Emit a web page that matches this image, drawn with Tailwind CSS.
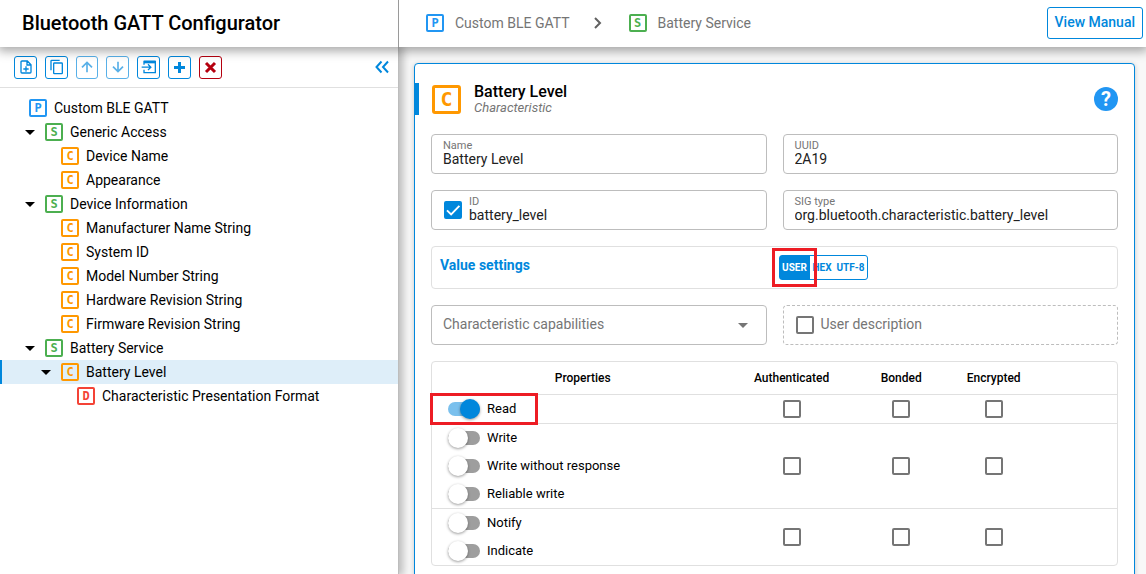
<!DOCTYPE html>
<html lang="en">
<head>
<meta charset="utf-8">
<meta name="viewport" content="width=device-width, initial-scale=1">
<title>Bluetooth GATT Configurator</title>
<script src="https://cdn.jsdelivr.net/npm/@tailwindcss/browser@4"></script>
</head>
<body class="flex h-screen flex-col overflow-hidden bg-[#f8f8f8] font-['Roboto',sans-serif] text-sm text-black">

<header class="relative z-10 flex h-[47px] shrink-0 bg-white shadow-[0_2px_10px_2px_rgba(0,0,0,0.35)]">
  <div class="flex w-[399px] shrink-0 items-center border-r border-[#9a9a9a] pb-0.5 pl-[22px]">
    <h1 class="text-xl font-medium">Bluetooth GATT Configurator</h1>
  </div>
  <div class="flex flex-1 items-center justify-between pr-[3px] pb-0.5 pl-[27px]">
    <nav aria-label="Breadcrumb" class="flex items-center text-[#757575]">
      <a href="#project" class="flex items-center gap-[11px]"><span class="flex size-[18px] items-center justify-center rounded-xs border-2 border-[#2196f3] font-['DejaVu_Sans_Mono',monospace] text-xs leading-none font-bold text-[#2196f3]">P</span>Custom BLE GATT</a>
      <svg class="mx-[18px] size-[18px]" viewBox="0 0 18 18" fill="none" stroke="#616161" stroke-width="2" aria-hidden="true"><path d="M7 4l5 5-5 5"/></svg>
      <a href="#service" class="flex items-center gap-[11px] pl-[5px]"><span class="flex size-[18px] items-center justify-center rounded-xs border-2 border-[#4caf50] font-['DejaVu_Sans_Mono',monospace] text-xs leading-none font-bold text-[#4caf50]">S</span>Battery Service</a>
    </nav>
    <button type="button" class="h-8 rounded-[3px] border border-[#0087dc] px-[7px] pb-0.5 font-medium text-[#0087dc]">View Manual</button>
  </div>
</header>

<div class="flex min-h-0 flex-1">
  <aside class="relative w-[399px] shrink-0 border-r border-[#bdbdbd] bg-white shadow-[2px_0_8px_2px_rgba(0,0,0,0.25)]">
    <div role="toolbar" aria-label="Attribute actions" class="flex h-[41px] items-center gap-2 border-b border-[#e0e0e0] pr-2 pl-[14px] text-[#0087dc]">
      <button type="button" aria-label="New item" class="flex size-[23px] items-center justify-center rounded-[3px] border border-current">
        <svg class="size-4" viewBox="0 0 24 24" fill="none" stroke="currentColor" stroke-width="2"><path d="M14 3H6a1.500 1.500 0 0 0-1.500 1.500v15A1.500 1.500 0 0 0 6 21h12a1.500 1.500 0 0 0 1.500-1.500V8.500zM13.500 3v6h6M12 11v8M8 15h8"/></svg></button>
      <button type="button" aria-label="Duplicate" class="flex size-[23px] items-center justify-center rounded-[3px] border border-current">
        <svg class="size-4" viewBox="0 0 24 24" fill="currentColor"><path d="M19 21H8V7h11m0-2H8a2 2 0 0 0-2 2v14a2 2 0 0 0 2 2h11a2 2 0 0 0 2-2V7a2 2 0 0 0-2-2m-3-4H4a2 2 0 0 0-2 2v14h2V3h12z"/></svg></button>
      <button type="button" aria-label="Move up" class="flex h-[23px] w-[22px] items-center justify-center rounded-[3px] border border-current opacity-65">
        <svg class="size-4" viewBox="0 0 24 24" fill="none" stroke="currentColor" stroke-width="2.500"><path d="M12 20V5M4.500 12.500L12 5l7.500 7.500"/></svg></button>
      <button type="button" aria-label="Move down" class="flex size-[23px] items-center justify-center rounded-[3px] border border-current opacity-65">
        <svg class="size-4" viewBox="0 0 24 24" fill="none" stroke="currentColor" stroke-width="2.500"><path d="M12 4v15M4.500 11.500L12 19l7.500-7.500"/></svg></button>
      <button type="button" aria-label="Import" class="flex size-[23px] items-center justify-center rounded-[3px] border border-current">
        <svg class="size-4" viewBox="0 0 24 24" fill="none" stroke="currentColor" stroke-width="2"><path d="M4.500 8.500V3.500h17v17h-17V16M1 12.250h13M10.500 8l4.250 4.250-4.250 4.250"/><path d="M4.500 4.500h17" stroke-width="4"/></svg></button>
      <button type="button" aria-label="Add" class="flex size-[23px] items-center justify-center rounded-[3px] border border-current">
        <svg class="size-[15px]" viewBox="0 0 15 15" fill="none" stroke="currentColor" stroke-width="3"><path d="M7.500 2v11M2 7.500h11"/></svg></button>
      <button type="button" aria-label="Delete" class="flex size-[23px] items-center justify-center rounded-[3px] border border-current text-[#b5000f]">
        <svg class="size-[15px]" viewBox="0 0 15 15" fill="none" stroke="currentColor" stroke-width="3"><path d="M3 3l9 9M12 3l-9 9"/></svg></button>
      <button type="button" aria-label="Collapse panel" class="ml-auto">
        <svg class="size-4" viewBox="0 0 16 16" fill="none" stroke="currentColor" stroke-width="2"><path d="M7.500 2.500L2.500 8l5 5.500M14 2.500L9 8l5 5.500"/></svg></button>
    </div>

    <ul id="tree" role="tree" aria-label="GATT database" class="pt-2"></ul>
  </aside>

  <main class="min-w-0 flex-1 pt-4 pr-[11px] pl-[15px]">
    <section class="min-h-full rounded border border-[#0087dc] bg-white px-4 pb-4 shadow-[0_1px_5px_rgba(0,0,0,0.2)]">
      <div class="-ml-4 flex items-center pt-[18px]">
        <span class="h-8 w-1 bg-[#0087dc]"></span>
        <span class="ml-[13px] flex size-[29px] items-center justify-center rounded-[3px] border-[3px] border-[#ff9800] font-['DejaVu_Sans_Mono',monospace] text-xl leading-none font-bold text-[#ff9800]">C</span>
        <div class="ml-[13px] flex-1 pt-0.5">
          <h2 class="text-base leading-4 font-medium">Battery Level</h2>
          <p class="text-[13px] leading-4 text-[#757575] italic">Characteristic</p>
        </div>
        <button type="button" aria-label="Help" class="flex size-6 items-center justify-center rounded-full bg-[#2196f3] text-xl leading-none font-bold text-white">?</button>
      </div>

      <form class="mt-[18px] grid grid-cols-2 gap-4">
        <label class="flex h-10 flex-col rounded border border-[#bdbdbd] px-[11px] pt-[5px] text-[11px] leading-[11px] text-[#757575]">Name
          <input type="text" value="Battery Level" class="h-4 w-full text-sm leading-4 text-[#212121] outline-none"></label>
        <label class="flex h-10 flex-col rounded border border-[#bdbdbd] px-[11px] pt-[5px] text-[11px] leading-[11px] text-[#757575]">UUID
          <input type="text" value="2A19" class="h-4 w-full text-sm leading-4 text-[#212121] outline-none"></label>
        <div class="flex h-10 items-center gap-[7px] rounded border border-[#bdbdbd] px-3">
          <span class="grid size-[18px] place-items-center">
            <input type="checkbox" checked aria-label="Enable ID" class="col-start-1 row-start-1 size-[18px] appearance-none rounded-xs border-2 border-[#757575] checked:border-[#0087dc] checked:bg-[#0087dc]">
            <svg class="pointer-events-none col-start-1 row-start-1 size-[18px]" viewBox="0 0 24 24" fill="none" stroke="#fff" stroke-width="2.500" aria-hidden="true"><path d="M4 12.500l5.500 5.500L20.500 6.500"/></svg>
          </span>
          <label class="flex h-full flex-1 flex-col pt-[5px] text-[11px] leading-[11px] text-[#757575]">ID
            <input type="text" value="battery_level" class="h-4 w-full text-sm leading-4 text-[#212121] outline-none"></label>
        </div>
        <label class="flex h-10 flex-col rounded border border-[#bdbdbd] px-[11px] pt-[5px] text-[11px] leading-[11px] text-[#757575]">SIG type
          <input type="text" value="org.bluetooth.characteristic.battery_level" class="h-4 w-full text-sm leading-4 text-[#212121] outline-none"></label>

        <div class="col-span-2 grid h-[43px] grid-cols-2 items-center gap-2 rounded border border-[#e0e0e0] px-2">
          <h3 class="pb-1.5 font-bold text-[#0087dc]">Value settings</h3>
          <div class="flex">
            <div role="group" aria-label="Value type" class="relative flex h-[25px] rounded-[3px] border border-[#0087dc] text-[10px] font-bold text-[#0087dc]">
              <button type="button" aria-pressed="true" class="w-[30px] bg-[#0087dc] pt-0.5 text-white">USER</button>
              <button type="button" class="w-[25px] pt-0.5">HEX</button>
              <button type="button" class="w-8 pt-0.5">UTF-8</button>
              <span class="pointer-events-none absolute -top-2 -left-2 h-[39px] w-[45px] border-3 border-[#ed1c24]"></span>
            </div>
          </div>
        </div>

        <div class="grid h-10 items-center rounded border border-[#bdbdbd] px-[11px]">
          <select aria-label="Characteristic capabilities" class="col-start-1 row-start-1 w-full appearance-none pb-0.5 text-[#757575] outline-none"><option>Characteristic capabilities</option></select>
          <svg class="pointer-events-none col-start-1 row-start-1 mr-[7px] h-[5px] w-[10px] justify-self-end" viewBox="0 0 10 5" fill="#757575" aria-hidden="true"><path d="M0 0h10L5 5z"/></svg>
        </div>
        <label class="flex h-10 items-center gap-[7px] rounded border border-dashed border-[#bdbdbd] px-3 text-[#757575]">
          <input type="checkbox" class="size-[18px] appearance-none rounded-xs border-2 border-[#757575]"><span class="pb-0.5">User description</span></label>

        <div class="col-span-2 rounded border border-[#e0e0e0]">
          <table class="w-full table-fixed text-[13px]">
            <thead>
              <tr class="h-8 text-xs">
                <th scope="col" class="w-[44%] p-0 font-medium">Properties</th>
                <th scope="col" class="w-[17%] p-0 font-medium">Authenticated</th>
                <th scope="col" class="w-[15%] p-0 font-medium">Bonded</th>
                <th scope="col" class="w-[12%] p-0 font-medium">Encrypted</th>
                <td></td>
              </tr>
            </thead>
            <tbody id="properties"></tbody>
          </table>
        </div>
      </form>
    </section>
  </main>
</div>

<script>
  const kinds = {
    P: 'border-[#2196f3] text-[#2196f3]',
    S: 'border-[#4caf50] text-[#4caf50]',
    C: 'border-[#ff9800] text-[#ff9800]',
    D: 'border-[#f44336] text-[#f44336]'
  };
  const indents = ['pl-2', 'pl-6', 'pl-10', 'pl-14'];
  const nodes = [
    [0, 'P', 'Custom BLE GATT'],
    [1, 'S', 'Generic Access', true],
    [2, 'C', 'Device Name'],
    [2, 'C', 'Appearance'],
    [1, 'S', 'Device Information', true],
    [2, 'C', 'Manufacturer Name String'],
    [2, 'C', 'System ID'],
    [2, 'C', 'Model Number String'],
    [2, 'C', 'Hardware Revision String'],
    [2, 'C', 'Firmware Revision String'],
    [1, 'S', 'Battery Service', true],
    [2, 'C', 'Battery Level', true, true],
    [3, 'D', 'Characteristic Presentation Format']
  ];
  document.getElementById('tree').innerHTML = nodes.map(([level, kind, name, open, selected]) => `
    <li role="treeitem" aria-level="${level + 1}" class="flex h-6 items-center border-l-2 ${indents[level]} ${selected ? 'border-[#0087dc] bg-[#deeef9]' : 'border-transparent'}">
      <span class="flex w-[19px] items-center">${open ? '<svg class="-ml-px h-[5px] w-[10px]" viewBox="0 0 10 5" aria-hidden="true"><path d="M0 0h10L5 5z"/></svg>' : ''}</span>
      <span class="mr-[7px] flex size-[18px] items-center justify-center rounded-xs border-2 font-['DejaVu_Sans_Mono',monospace] text-xs leading-none font-bold ${kinds[kind]}">${kind}</span>
      <span>${name}</span>
    </li>`).join('');

  const groups = [['Read'], ['Write', 'Write without response', 'Reliable write'], ['Notify', 'Indicate']];
  const enabled = 'Read';
  document.getElementById('properties').innerHTML = groups.map(names => `
    <tr class="border-t border-[#e0e0e0]">
      <td class="p-0 pl-4">${names.map(name => `
        <div class="relative flex h-7 items-center">
          <label class="flex items-center gap-[7px]">
            <input type="checkbox" role="switch" ${name === enabled ? 'checked' : ''} class="flex h-[14px] w-8 appearance-none items-center rounded-full bg-[#9e9e9e] before:size-5 before:shrink-0 before:rounded-full before:bg-white before:shadow-[0_1px_3px_rgba(0,0,0,0.4)] checked:justify-end checked:bg-[#7ac0ed] checked:before:bg-[#0087dc]"><span class="pt-0.5">${name}</span></label>
          ${name === enabled ? '<span class="pointer-events-none absolute -inset-y-0.5 -left-[18px] w-[108px] border-3 border-[#ed1c24]"></span>' : ''}
        </div>`).join('')}</td>
      ${['Authenticated', 'Bonded', 'Encrypted'].map(column => `
      <td class="p-0"><input type="checkbox" aria-label="${names.join(', ')}: ${column}" class="mx-auto block size-[18px] appearance-none rounded-xs border-2 border-[#757575]"></td>`).join('')}
      <td></td>
    </tr>`).join('');
</script>
</body>
</html>
